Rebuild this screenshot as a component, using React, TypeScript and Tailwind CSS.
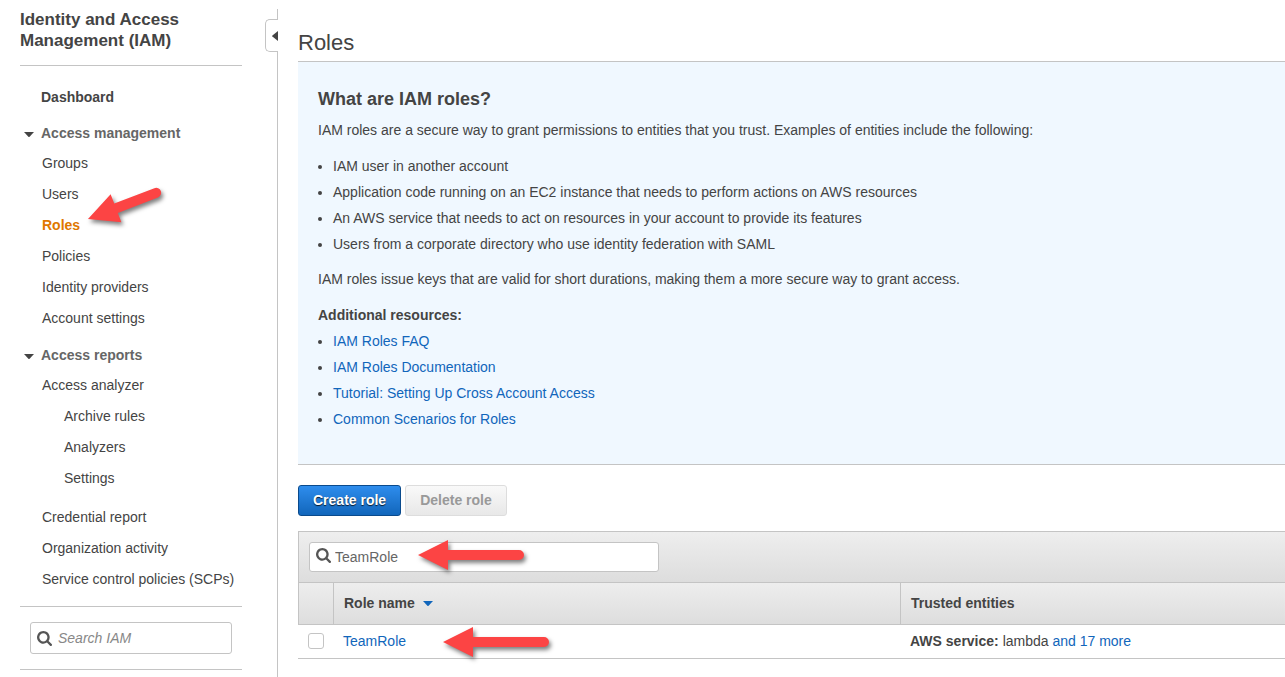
import { useState } from "react";

type NavItem = { label: string; nested?: boolean; current?: boolean };

const managementLinks: NavItem[] = [
  { label: "Groups" },
  { label: "Users" },
  { label: "Roles", current: true },
  { label: "Policies" },
  { label: "Identity providers" },
  { label: "Account settings" },
];

const analyzerLinks: NavItem[] = [
  { label: "Access analyzer" },
  { label: "Archive rules", nested: true },
  { label: "Analyzers", nested: true },
  { label: "Settings", nested: true },
];

const reportLinks: NavItem[] = [
  { label: "Credential report" },
  { label: "Organization activity" },
  { label: "Service control policies (SCPs)" },
];

const roleExamples = [
  "IAM user in another account",
  "Application code running on an EC2 instance that needs to perform actions on AWS resources",
  "An AWS service that needs to act on resources in your account to provide its features",
  "Users from a corporate directory who use identity federation with SAML",
];

const resources = [
  "IAM Roles FAQ",
  "IAM Roles Documentation",
  "Tutorial: Setting Up Cross Account Access",
  "Common Scenarios for Roles",
];

function SearchIcon({ className }: { className: string }) {
  return (
    <svg viewBox="0 128 1664 1664" className={className} fill="currentColor" aria-hidden="true">
      <path d="M1152 832q0-185-131.5-316.5t-316.5-131.5-316.5 131.5-131.5 316.5 131.5 316.5 316.5 131.5 316.5-131.5 131.5-316.5zm512 832q0 52-38 90t-90 38q-54 0-90-38l-343-342q-179 124-399 124-143 0-273.5-55.5t-225-150-150-225-55.5-273.5 55.5-273.5 150-225 225-150 273.5-55.5 273.5 55.5 225 150 150 225 55.5 273.5q0 220-124 399l343 343q37 37 37 90z" />
    </svg>
  );
}

function Caret({ className }: { className: string }) {
  return (
    <svg viewBox="0 0 10 5" className={className} fill="currentColor" aria-hidden="true">
      <path d="M0 0H10L5.6 4.7Q5 5.2 4.4 4.7Z" />
    </svg>
  );
}

function PointerArrow({ className }: { className: string }) {
  return (
    <svg
      width="106"
      height="30"
      viewBox="0 0 106 30"
      className={`pointer-events-none absolute z-10 overflow-visible drop-shadow-[2px_3px_2px_rgba(0,0,0,0.5)] ${className}`}
      fill="#fc4444"
      aria-hidden="true"
    >
      <path d="M0 15L30 0V10H101A5 5 0 0 1 101 20H30V30Z" />
    </svg>
  );
}

function TiltedArrow({ className }: { className: string }) {
  return (
    <svg
      width="74"
      height="36"
      viewBox="0 0 74 36"
      className={`pointer-events-none absolute z-10 overflow-visible drop-shadow-[2px_3px_2px_rgba(0,0,0,0.5)] ${className}`}
      fill="#fc4444"
      aria-hidden="true"
    >
      <path transform="translate(0 32) rotate(-21)" d="M0 0L30 -15V-5H73A5 5 0 0 1 73 5H30V15Z" />
    </svg>
  );
}

function NavLinks({ items }: { items: NavItem[] }) {
  return (
    <ul className="pl-[22px]">
      {items.map((item) => (
        <li key={item.label} className={`relative leading-[31px] ${item.nested ? "pl-[22px]" : ""}`}>
          <a
            href="#"
            aria-current={item.current ? "page" : undefined}
            className={item.current ? "font-bold text-[#e07700]" : "hover:underline"}
          >
            {item.label}
          </a>
          {item.current && <TiltedArrow className="top-[-23px] left-[46px]" />}
        </li>
      ))}
    </ul>
  );
}

function NavHeading({ children }: { children: string }) {
  return (
    <button type="button" aria-expanded="true" className="flex h-[30px] w-full items-center pl-1 font-bold text-[#666]">
      <Caret className="mt-[2px] mr-[7px] h-[5px] w-[10px] text-[#444]" />
      {children}
    </button>
  );
}

function Sidebar() {
  return (
    <aside className="relative w-[278px] shrink-0 border-r border-[#c4c4c4] pr-[35px] pl-5">
      <button
        type="button"
        aria-label="Collapse navigation"
        className="absolute top-[10px] right-[-1px] flex h-[33px] w-[13px] items-center justify-end rounded-l-[5px] border border-r-0 border-[#c4c4c4] bg-white"
      >
        <svg viewBox="0 0 6 10" className="h-[10px] w-[6px]" fill="#444" aria-hidden="true">
          <path d="M6 0V10L0.4 5.6Q0 5 0.4 4.4Z" />
        </svg>
      </button>
      <h2 className="border-b border-[#c4c4c4] pb-[14px] text-[17px] leading-[21px] font-bold">
        Identity and Access
        <br />
        Management (IAM)
      </h2>
      <nav aria-label="IAM" className="border-b border-[#c4c4c4] pt-4 pb-[11px]">
        <a href="#" className="mb-[6px] block pl-[21px] leading-[30px] font-bold">
          Dashboard
        </a>
        <NavHeading>Access management</NavHeading>
        <NavLinks items={managementLinks} />
        <div className="pt-[6px]">
          <NavHeading>Access reports</NavHeading>
        </div>
        <NavLinks items={analyzerLinks} />
        <div className="pt-2">
          <NavLinks items={reportLinks} />
        </div>
      </nav>
      <div className="border-b border-[#c4c4c4] px-[10px] py-[15px]">
        <label className="flex h-8 items-center rounded-[3px] border border-[#c4c4c4] pl-[6px]">
          <SearchIcon className="h-[15px] w-[15px] shrink-0 text-[#555]" />
          <input
            type="search"
            aria-label="Search IAM"
            placeholder="Search IAM"
            className="ml-[6px] w-full min-w-0 bg-transparent outline-none placeholder:text-[#888] placeholder:italic"
          />
        </label>
      </div>
    </aside>
  );
}

function InfoPanel() {
  return (
    <section className="border-b border-[#c4c4c4] bg-[#f0f8ff] px-5 pt-6 pb-8 leading-[26px]">
      <h2 className="text-[18px] leading-[26px] font-bold">What are IAM roles?</h2>
      <p className="mt-[5px]">
        IAM roles are a secure way to grant permissions to entities that you trust. Examples of entities include the
        following:
      </p>
      <ul className="mt-[10px] list-disc pl-[15px]">
        {roleExamples.map((text) => (
          <li key={text}>{text}</li>
        ))}
      </ul>
      <p className="mt-[9px]">
        IAM roles issue keys that are valid for short durations, making them a more secure way to grant access.
      </p>
      <h3 className="mt-[10px] font-bold">Additional resources:</h3>
      <ul className="list-disc pl-[15px]">
        {resources.map((text) => (
          <li key={text}>
            <a href="#" className="text-[#1166bb] hover:underline">
              {text}
            </a>
          </li>
        ))}
      </ul>
    </section>
  );
}

function RolesTable() {
  const [query, setQuery] = useState("TeamRole");
  const [checked, setChecked] = useState(false);
  return (
    <div className="mt-[15px]">
      <div className="border-t border-l border-[#c4c4c4] bg-linear-to-b from-[#eee] to-[#ddd] p-[10px]">
        <div className="relative flex">
          <label className="flex h-[30px] w-[350px] items-center rounded-[3px] border border-[#c4c4c4] bg-white pl-[6px]">
            <SearchIcon className="mb-[3px] h-[15px] w-[15px] shrink-0 text-[#555]" />
            <input
              type="search"
              aria-label="Search roles"
              value={query}
              onChange={(event) => setQuery(event.target.value)}
              className="ml-1 w-full min-w-0 bg-transparent text-[#666] outline-none"
            />
          </label>
          <PointerArrow className="top-[-2px] left-[109px]" />
        </div>
      </div>
      <table className="w-full table-fixed border-separate border-spacing-0 text-left">
        <colgroup>
          <col className="w-[35px]" />
          <col className="w-[57.45%]" />
          <col />
        </colgroup>
        <thead>
          <tr className="h-[43px] bg-linear-to-b from-[#eee] to-[#ddd]">
            <td className="border-y border-l border-[#c4c4c4]" />
            <th scope="col" className="border-y border-l border-[#c4c4c4] pb-[2px] pl-[10px]">
              <button type="button" className="flex items-center font-bold">
                Role name
                <Caret className="mt-[2px] ml-2 h-[5px] w-[10px] text-[#1166bb]" />
              </button>
            </th>
            <th scope="col" className="border-y border-l border-[#c4c4c4] pb-[2px] pl-[10px]">
              Trusted entities
            </th>
          </tr>
        </thead>
        <tbody>
          <tr className="h-[34px]">
            <td className="border-b border-[#c4c4c4] pb-[2px] pl-[10px]">
              <input
                type="checkbox"
                aria-label="Select TeamRole"
                checked={checked}
                onChange={(event) => setChecked(event.target.checked)}
                className="block h-4 w-4 appearance-none rounded-[3px] border border-[#c4c4c4] bg-white checked:bg-[#1166bb]"
              />
            </td>
            <td className="border-b border-[#c4c4c4] pb-[2px] pl-[10px]">
              <div className="relative">
                <a href="#" className="text-[#1166bb] hover:underline">
                  TeamRole
                </a>
                <PointerArrow className="top-[-4px] left-[100px]" />
              </div>
            </td>
            <td className="border-b border-[#c4c4c4] pb-[2px] pl-[10px]">
              <b>AWS service:</b> lambda{" "}
              <a href="#" className="text-[#1166bb] hover:underline">
                and 17 more
              </a>
            </td>
          </tr>
        </tbody>
      </table>
    </div>
  );
}

export default function App() {
  return (
    <div className="flex min-h-screen bg-white pt-[9px] font-['Liberation_Sans',Arial,sans-serif] text-[14px] leading-5 text-[#444]">
      <Sidebar />
      <main className="min-w-0 flex-1 pt-5 pl-5">
        <h1 className="border-b border-[#c4c4c4] pb-1 text-[22px] leading-7">Roles</h1>
        <InfoPanel />
        <div className="mt-5 flex gap-1">
          <button
            type="button"
            className="h-[31px] rounded-[3px] border border-[#0a4a8c] bg-linear-to-b from-[#2e8ded] to-[#1166bb] px-[14px] pb-[2px] font-bold text-white text-shadow-[0_1px_1px_rgba(0,0,0,0.8)]"
          >
            Create role
          </button>
          <button
            type="button"
            disabled
            className="h-[31px] rounded-[3px] border border-[#ddd] bg-linear-to-b from-[#f9f9f9] to-[#e8e8e8] px-[14px] pb-[2px] font-bold text-[#999]"
          >
            Delete role
          </button>
        </div>
        <RolesTable />
      </main>
    </div>
  );
}
